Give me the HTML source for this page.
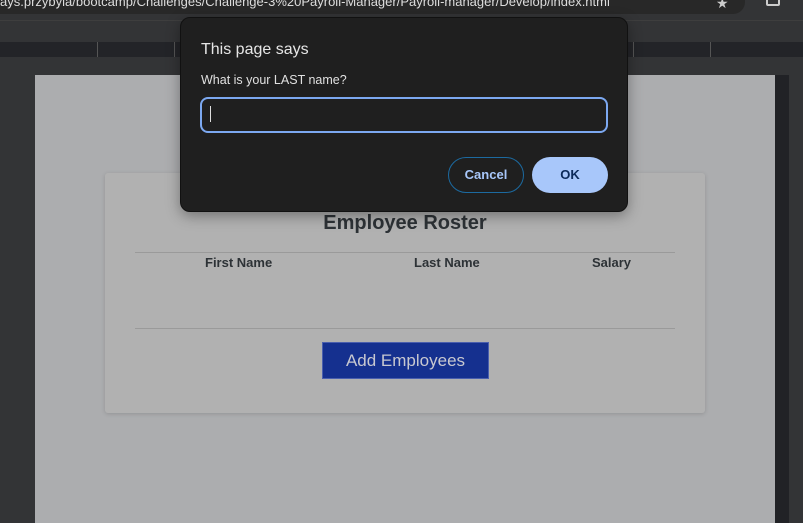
<!DOCTYPE html>
<html><head><meta charset="utf-8"><style>
*{margin:0;padding:0;box-sizing:border-box}
body{width:803px;height:523px;overflow:hidden;background:#333436;font-family:"Liberation Sans",sans-serif;position:relative}
.abs{position:absolute}
</style></head><body>
<div class="abs" style="left:0;top:0;width:745px;height:14px;background:#282828;border-radius:0 0 12px 0;overflow:hidden;color:#ddd;font-size:13px;line-height:4px;white-space:nowrap;">ays.przybyla/bootcamp/Challenges/Challenge-3%20Payroll-Manager/Payroll-manager/Develop/index.html</div>
<div class="abs" style="left:716px;top:0;color:#ccc;font-size:14px;line-height:6px">★</div>
<div class="abs" style="left:766px;top:-4px;width:14px;height:10px;border:2px solid #ccc;border-radius:2px"></div>
<div class="abs" style="left:0;top:20px;width:803px;height:1px;background:#3e3e3e"></div>
<div class="abs" style="left:0;top:42px;width:803px;height:15px;background:#232428"></div>
<div class="abs" style="left:97px;top:42px;width:1px;height:15px;background:#555"></div>
<div class="abs" style="left:174px;top:42px;width:1px;height:15px;background:#555"></div>
<div class="abs" style="left:633px;top:42px;width:1px;height:15px;background:#555"></div>
<div class="abs" style="left:710px;top:42px;width:1px;height:15px;background:#555"></div>
<div class="abs" style="left:35px;top:75px;width:740px;height:448px;background:#acadaf"></div>
<div class="abs" style="left:775px;top:75px;width:14px;height:448px;background:#212226"></div>
<div class="abs" style="left:105px;top:173px;width:600px;height:240px;background:#b1b1b1;border-radius:3px;box-shadow:0 1px 4px rgba(0,0,0,.15)"></div>
<div class="abs" style="left:105px;top:212px;width:600px;text-align:center;font-size:20px;font-weight:bold;color:#2d3236">Employee Roster</div>
<div class="abs" style="left:135px;top:252px;width:540px;height:1px;background:#9a9a9a"></div>
<div class="abs" style="left:135px;top:328px;width:540px;height:1px;background:#9a9a9a"></div>
<div class="abs" style="left:205px;top:255px;font-size:13px;font-weight:bold;color:#2d3236">First Name</div>
<div class="abs" style="left:414px;top:255px;font-size:13px;font-weight:bold;color:#2d3236">Last Name</div>
<div class="abs" style="left:592px;top:255px;font-size:13px;font-weight:bold;color:#2d3236">Salary</div>
<div class="abs" style="left:322px;top:342px;width:167px;height:37px;background:#15308f;border:1px solid #4a5fae;color:#c8c8d0;font-size:17px;text-align:center;line-height:35px">Add Employees</div>
<div class="abs" style="left:180px;top:17px;width:448px;height:195px;background:#1f1f1f;border:1px solid #111;border-radius:10px;box-shadow:0 4px 14px rgba(0,0,0,.35)"></div>
<div class="abs" style="left:201px;top:41px;font-size:16px;color:#e6e6e6">This page says</div>
<div class="abs" style="left:201px;top:73px;font-size:12.5px;color:#e0e0e0">What is your LAST name?</div>
<div class="abs" style="left:200px;top:97px;width:408px;height:36px;border:2px solid #7ca8f0;border-radius:8px;background:#1f1f1f"></div>
<div class="abs" style="left:210px;top:106px;width:1px;height:16px;background:#ddd"></div>
<div class="abs" style="left:448px;top:157px;width:76px;height:36px;border:1px solid #1c6aa0;border-radius:18px;color:#a8c7fa;font-size:13px;font-weight:bold;text-align:center;line-height:34px">Cancel</div>
<div class="abs" style="left:532px;top:157px;width:76px;height:36px;background:#a8c7fa;border-radius:18px;color:#0b2a5a;font-size:13px;font-weight:bold;text-align:center;line-height:36px">OK</div>
</body></html>
